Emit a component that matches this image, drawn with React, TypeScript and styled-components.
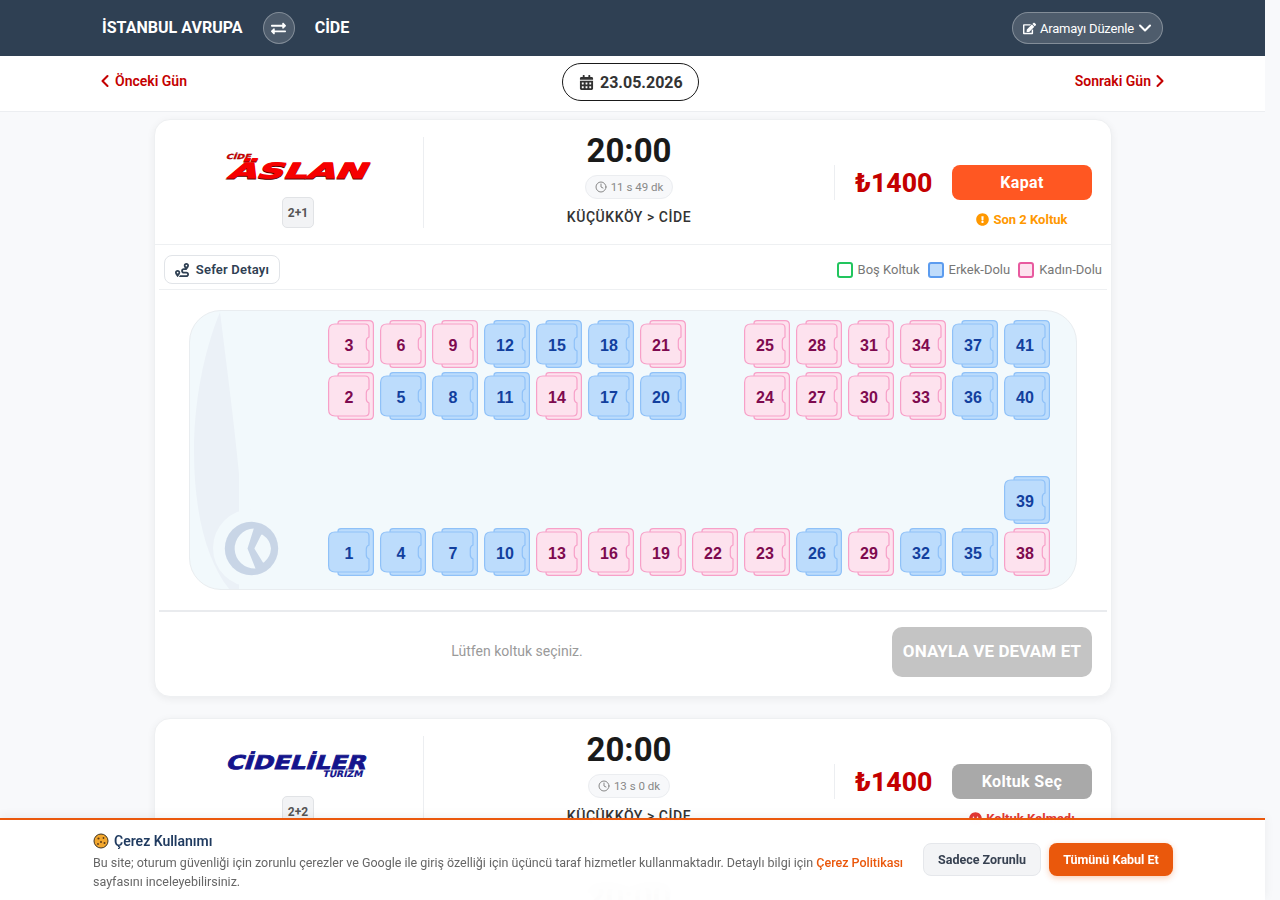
import { ReactNode } from 'react';
import styled, { createGlobalStyle } from 'styled-components';
import { ChevronDown, ChevronLeft, ChevronRight, Clock } from 'lucide-react';
import {
	FaCalendarAlt,
	FaEdit,
	FaExchangeAlt,
	FaExclamationCircle,
	FaFrown,
	FaRoute,
} from 'react-icons/fa';

const GlobalStyle = createGlobalStyle`
	html, body {
		margin: 0;
		height: 900px;
		overflow: hidden;
		background: #f8f9fb;
		font-family: Roboto, "Liberation Sans", sans-serif;
	}
	* { box-sizing: border-box; }
`;

const Page = styled.div`
	width: 1265px;
	height: 900px;
	overflow: hidden;
`;

const Header = styled.header`
	height: 56px;
	background: #2f4053;
	color: #fff;
	display: flex;
	align-items: center;
	justify-content: space-between;
	padding: 0 102px;
`;

const RouteTitle = styled.div`
	display: flex;
	align-items: center;
	gap: 20px;
	font-size: 16px;
	font-weight: 700;
	letter-spacing: 0.03px;
`;

const RouteName = styled.span`
	padding-bottom: 2px;
`;

const SwapCircle = styled.span`
	width: 32px;
	height: 32px;
	border-radius: 50%;
	display: flex;
	align-items: center;
	justify-content: center;
	background: rgba(255, 255, 255, 0.15);
	border: 1px solid rgba(255, 255, 255, 0.3);
	font-size: 15px;
`;

const EditButton = styled.button`
	width: 151px;
	height: 32px;
	border-radius: 16px;
	display: flex;
	align-items: center;
	gap: 4px;
	color: #fff;
	font: 400 13px Roboto, sans-serif;
	letter-spacing: -0.2px;
	background: rgba(255, 255, 255, 0.15);
	border: 1px solid rgba(255, 255, 255, 0.3);
	padding: 0 0 0 10px;
	svg:last-child {
		margin-left: -3px;
	}
`;

const DateBar = styled.div`
	height: 56px;
	background: #fff;
	border-bottom: 1px solid #eceef1;
	display: flex;
	align-items: flex-start;
	justify-content: space-between;
	padding: 7px 102px 0;
`;

const DayLink = styled.a`
	height: 36px;
	display: flex;
	align-items: center;
	color: #c40000;
	font-size: 14px;
	font-weight: 600;
`;

const PrevIcon = styled(ChevronLeft)`
	margin-left: -7px;
`;

const NextIcon = styled(ChevronRight)`
	margin: 0 -7px 0 -1px;
`;

const DatePill = styled.div`
	width: 137px;
	height: 38px;
	border: 1.5px solid #1a1a1a;
	border-radius: 19px;
	display: flex;
	align-items: center;
	justify-content: center;
	gap: 6px;
	color: #333;
	font-size: 16px;
	font-weight: 700;
`;

const Main = styled.main`
	width: 958px;
	margin: 7px 0 0 154px;
	display: flex;
	flex-direction: column;
	gap: 21px;
`;

const Card = styled.article`
	background: #fff;
	border: 1px solid #eef0f2;
	border-radius: 16px;
	box-shadow: 0 2px 8px rgba(0, 0, 0, 0.06);
	margin: 0;
`;

const Summary = styled.section`
	display: flex;
	padding: 17px 0 0;
	height: 125px;
`;

const SummaryOpen = styled(Summary)`
	border-bottom: 1px solid #eef0f2;
`;

const LogoColumn = styled.div`
	width: 269px;
	height: 91px;
	padding-left: 18px;
	border-right: 1px solid #eceef1;
	display: flex;
	flex-direction: column;
	align-items: center;
`;

const LogoBox = styled.div`
	height: 60px;
	display: flex;
	align-items: center;
	justify-content: center;
`;

const LogoArt = styled.svg`
	margin-right: -20px;
`;

const LayoutBadge = styled.span`
	width: 32px;
	height: 31px;
	display: flex;
	align-items: center;
	justify-content: center;
	background: #f2f3f5;
	border: 1px solid #e1e3e6;
	border-radius: 5px;
	color: #555;
	font-size: 12px;
	font-weight: 700;
`;

const TimeColumn = styled.div`
	flex: 1;
	display: flex;
	flex-direction: column;
	align-items: center;
`;

const Time = styled.div`
	margin-top: -1px;
	font-size: 33px;
	line-height: 30px;
	font-weight: 700;
	color: #1a1a1a;
`;

const Duration = styled.span`
	margin-top: 9px;
	height: 24px;
	padding: 0 9px;
	display: flex;
	align-items: center;
	gap: 4px;
	background: #f7f8fa;
	border: 1px solid #ebedf0;
	border-radius: 12px;
	color: #888;
	font-size: 11.5px;
`;

const Stops = styled.div`
	margin-top: 10px;
	font-size: 14px;
	font-weight: 500;
	letter-spacing: 0.55px;
	color: #333;
`;

const PriceColumn = styled.div`
	width: 277px;
	padding: 28px 19px 0 0;
	display: flex;
	flex-direction: column;
	align-items: flex-end;
`;

const PriceRow = styled.div`
	width: 258px;
	height: 35px;
	display: flex;
	align-items: center;
	justify-content: space-between;
	border-left: 1px solid #eceef1;
	padding-left: 20px;
`;

const Price = styled.strong`
	font-size: 26.6px;
	font-weight: 800;
	color: #c40000;
`;

const ActionButton = styled.button`
	width: 140px;
	height: 35px;
	border: 0;
	border-radius: 8px;
	color: #fff;
	font: 700 16px Roboto, sans-serif;
	letter-spacing: 0.35px;
	background: ${(p: { $muted?: boolean }) => (p.$muted ? '#a9a9a9' : '#ff5722')};
`;

const Note = styled.div`
	width: 140px;
	margin-top: 12px;
	display: flex;
	align-items: center;
	justify-content: center;
	gap: 4px;
	font-size: 13px;
	font-weight: 700;
	color: ${(p: { $color: string }) => p.$color};
`;

const DetailBar = styled.div`
	height: 45px;
	margin: 0 4px;
	padding: 10px 5px 0;
	border-bottom: 1px solid #eef0f2;
	display: flex;
	align-items: flex-start;
	justify-content: space-between;
`;

const DetailButton = styled.button`
	width: 116px;
	height: 29px;
	border: 1px solid #e1e4e8;
	border-radius: 8px;
	background: #fff;
	display: flex;
	align-items: center;
	justify-content: center;
	gap: 7px;
	color: #2f4053;
	font: 600 13px Roboto, sans-serif;
	letter-spacing: 0.2px;
	padding: 0;
`;

const Legend = styled.div`
	height: 29px;
	display: flex;
	gap: 8px;
	font-size: 13px;
	color: #777;
`;

const LegendItem = styled.span`
	display: flex;
	align-items: center;
	gap: 5px;
`;

const Swatch = styled.i<{ $border: string; $fill: string }>`
	width: 16px;
	height: 16px;
	border-radius: 3px;
	border: 2px solid ${(p) => p.$border};
	background: ${(p) => p.$fill};
`;

const BusPanel = styled.div`
	position: relative;
	width: 888px;
	height: 280px;
	margin: 20px auto;
	padding: 9px 0 0 138px;
	background: #f2f9fc;
	border: 1px solid #e9edf0;
	border-radius: 32px;
	overflow: hidden;
`;

const CockpitArt = styled.svg`
	position: absolute;
	left: 0;
	top: 0;
`;

const SeatGrid = styled.div`
	position: relative;
	display: grid;
	grid-template-columns: repeat(14, 46px);
	grid-auto-rows: 48px;
	column-gap: 6px;
	row-gap: 4px;
`;

type SeatKind = 'male' | 'female';

const seatColors = {
	male: { fill: '#bcdcfc', stroke: '#8fc1f8', text: '#123f9e' },
	female: { fill: '#fde2ee', stroke: '#f7a0c8', text: '#7e0a4f' },
};

const SeatBox = styled.div<{ $row: number; $col: number; $kind: SeatKind }>`
	position: relative;
	grid-row: ${(p) => p.$row};
	grid-column: ${(p) => p.$col};
	width: 46px;
	height: 48px;
	display: flex;
	align-items: center;
	justify-content: center;
	padding: 4px 4px 0 0;
	font: 700 16px "Liberation Sans", sans-serif;
	color: ${(p) => seatColors[p.$kind].text};
`;

const SeatShape = styled.svg`
	position: absolute;
	left: 0;
	top: 0;
`;

const SeatNumber = styled.span`
	position: relative;
`;

const Seat = ({ n, row, col, kind }: { n: number; row: number; col: number; kind: SeatKind }) => {
	const c = seatColors[kind];
	return (
		<SeatBox $row={row} $col={col} $kind={kind}>
			<SeatShape width="46" height="48" viewBox="0 0 46 48" fill={c.fill} stroke={c.stroke} strokeWidth="1.2">
				<path d="M10 4V3Q10 .6 13 .6H41Q45.4 .6 45.4 5V43Q45.400 47.400 41 47.400H13Q10 47.400 10 45V44" />
				<path d="M7 4H37Q41 4 41 8V17Q38.300 18 38.300 21V27Q38.300 30 41 31V40Q41 44 37 44H7Q.6 44 .6 37.500V10.500Q.6 4 7 4Z" />
			</SeatShape>
			<SeatNumber>{n}</SeatNumber>
		</SeatBox>
	);
};

const seatRows: { row: number; seats: [number, number, SeatKind][] }[] = [
	{
		row: 1,
		seats: [
			[3, 1, 'female'], [6, 2, 'female'], [9, 3, 'female'], [12, 4, 'male'], [15, 5, 'male'],
			[18, 6, 'male'], [21, 7, 'female'], [25, 9, 'female'], [28, 10, 'female'], [31, 11, 'female'],
			[34, 12, 'female'], [37, 13, 'male'], [41, 14, 'male'],
		],
	},
	{
		row: 2,
		seats: [
			[2, 1, 'female'], [5, 2, 'male'], [8, 3, 'male'], [11, 4, 'male'], [14, 5, 'female'],
			[17, 6, 'male'], [20, 7, 'male'], [24, 9, 'female'], [27, 10, 'female'], [30, 11, 'female'],
			[33, 12, 'female'], [36, 13, 'male'], [40, 14, 'male'],
		],
	},
	{ row: 4, seats: [[39, 14, 'male']] },
	{
		row: 5,
		seats: [
			[1, 1, 'male'], [4, 2, 'male'], [7, 3, 'male'], [10, 4, 'male'], [13, 5, 'female'],
			[16, 6, 'female'], [19, 7, 'female'], [22, 8, 'female'], [23, 9, 'female'], [26, 10, 'male'],
			[29, 11, 'female'], [32, 12, 'male'], [35, 13, 'male'], [38, 14, 'female'],
		],
	},
];

const BusFooter = styled.div`
	height: 86px;
	margin: 0 4px;
	border-top: 2px solid #e9ebee;
	display: flex;
	align-items: flex-start;
	padding: 15px 15px 0 15px;
	gap: 12px;
`;

const Hint = styled.p`
	flex: 1;
	margin: 0;
	padding: 16px 20px 0 0;
	text-align: center;
	font-size: 14px;
	color: #9a9a9a;
`;

const ConfirmButton = styled.button`
	width: 200px;
	height: 50px;
	border: 0;
	border-radius: 10px;
	background: #c4c4c4;
	color: #fff;
	font: 700 17px Roboto, sans-serif;
	letter-spacing: 0.1px;
	padding: 0 0 2px;
`;

const AslanLogo = () => (
	<LogoArt width="170" height="30" viewBox="0 0 170 30">
		<g fontFamily="DejaVu Sans" fontWeight="700">
			<text x="5.500" y="7.500" fontSize="7" fill="#e00000" stroke="#7a0000" strokeWidth="0.3" transform="skewX(-20)" textLength="25" lengthAdjust="spacingAndGlyphs">CİDE</text>
			<text x="18.500" y="27.500" fontSize="21" fill="#5a0000" stroke="#5a0000" strokeWidth="1" transform="skewX(-28)" textLength="138" lengthAdjust="spacingAndGlyphs">ÄSLAN</text>
			<text x="18" y="26.500" fontSize="21" fill="#f60000" stroke="#f60000" strokeWidth="1" transform="skewX(-28)" textLength="138" lengthAdjust="spacingAndGlyphs">ÄSLAN</text>
		</g>
	</LogoArt>
);

const CidelilerLogo = () => (
	<LogoArt width="166" height="30" viewBox="0 0 166 30">
		<g fontFamily="DejaVu Sans" fontWeight="700" fill="#14148c" stroke="#14148c">
			<text x="6" y="18" fontSize="19" strokeWidth="0.8" transform="skewX(-18)" textLength="140" lengthAdjust="spacingAndGlyphs">CİDELİLER</text>
			<text x="104" y="26.500" fontSize="9" strokeWidth="0.2" transform="skewX(-14)" textLength="40" lengthAdjust="spacingAndGlyphs">TURİZM</text>
		</g>
	</LogoArt>
);

type TripProps = {
	logo: ReactNode;
	layout: string;
	duration: string;
	action: string;
	muted?: boolean;
	noteIcon: ReactNode;
	note: string;
	noteColor: string;
	open?: boolean;
};

const Trip = ({ logo, layout, duration, action, muted, noteIcon, note, noteColor, open }: TripProps) => {
	const Top = open ? SummaryOpen : Summary;
	return (
		<Top>
			<LogoColumn>
				<LogoBox>{logo}</LogoBox>
				<LayoutBadge>{layout}</LayoutBadge>
			</LogoColumn>
			<TimeColumn>
				<Time>20:00</Time>
				<Duration>
					<Clock size={12} strokeWidth={2} />
					{duration}
				</Duration>
				<Stops>KÜÇÜKKÖY &gt; CİDE</Stops>
			</TimeColumn>
			<PriceColumn>
				<PriceRow>
					<Price>₺1400</Price>
					<ActionButton $muted={muted}>{action}</ActionButton>
				</PriceRow>
				<Note $color={noteColor}>
					{noteIcon}
					{note}
				</Note>
			</PriceColumn>
		</Top>
	);
};

const CookieBanner = styled.aside`
	position: fixed;
	left: 0;
	bottom: 0;
	width: 1265px;
	height: 82px;
	border-top: 2.5px solid #ea580c;
	background: rgba(255, 255, 255, 0.98);
	backdrop-filter: blur(8px);
	display: flex;
	padding: 12px 92px 0 93px;
	gap: 14px;
	box-shadow: 0 -2px 10px rgba(0, 0, 0, 0.06);
`;

const CookieText = styled.div`
	width: 816px;
`;

const CookieTitle = styled.div`
	display: flex;
	align-items: center;
	gap: 5px;
	font-size: 14px;
	font-weight: 600;
	line-height: 18px;
	color: #1f3a5f;
`;

const CookieBody = styled.p`
	margin: 3px 0 0;
	font-size: 12.5px;
	letter-spacing: -0.01px;
	line-height: 19px;
	color: #666;
`;

const PolicyLink = styled.a`
	color: #ea580c;
	font-weight: 500;
	white-space: nowrap;
`;

const CookieActions = styled.div`
	display: flex;
	gap: 8px;
	padding-top: 11px;
`;

const SecondaryButton = styled.button`
	width: 118px;
	height: 33px;
	border: 1px solid #e5e7eb;
	border-radius: 8px;
	background: #f3f4f6;
	color: #374151;
	font: 700 12.5px Roboto, sans-serif;
	padding: 0;
`;

const PrimaryButton = styled.button`
	width: 124px;
	height: 33px;
	border: 0;
	border-radius: 8px;
	background: #ea580c;
	color: #fff;
	font: 700 12.5px Roboto, sans-serif;
	padding: 0;
	box-shadow: 0 2px 6px rgba(234, 88, 12, 0.3);
`;

export default function App() {
	return (
		<Page>
			<GlobalStyle />
			<Header>
				<RouteTitle>
					<RouteName>İSTANBUL AVRUPA</RouteName>
					<SwapCircle>
						<FaExchangeAlt />
					</SwapCircle>
					<RouteName>CİDE</RouteName>
				</RouteTitle>
				<EditButton>
					<FaEdit size={13} />
					Aramayı Düzenle
					<ChevronDown size={20} strokeWidth={2.5} />
				</EditButton>
			</Header>
			<DateBar>
				<DayLink>
					<PrevIcon size={20} strokeWidth={2.5} />
					Önceki Gün
				</DayLink>
				<DatePill>
					<FaCalendarAlt size={15} />
					23.05.2026
				</DatePill>
				<DayLink>
					Sonraki Gün
					<NextIcon size={20} strokeWidth={2.5} />
				</DayLink>
			</DateBar>
			<Main>
				<Card>
					<Trip
						open
						logo={<AslanLogo />}
						layout="2+1"
						duration="11 s 49 dk"
						action="Kapat"
						noteIcon={<FaExclamationCircle size={13} />}
						note="Son 2 Koltuk"
						noteColor="#ff9800"
					/>
					<DetailBar>
						<DetailButton>
							<FaRoute size={14} />
							Sefer Detayı
						</DetailButton>
						<Legend>
							<LegendItem>
								<Swatch $border="#22c55e" $fill="#fff" />
								Boş Koltuk
							</LegendItem>
							<LegendItem>
								<Swatch $border="#5c9cef" $fill="#bfdcfb" />
								Erkek-Dolu
							</LegendItem>
							<LegendItem>
								<Swatch $border="#e85a9f" $fill="#fde2ee" />
								Kadın-Dolu
							</LegendItem>
						</Legend>
					</DetailBar>
					<BusPanel>
						<CockpitArt width="140" height="280" viewBox="0 0 140 280">
							<path d="M30 1C14 40 4 90 4 140C4 200 16 250 40 279H49V163C44 110 36 50 30 1Z" fill="#ebf1f7" />
							<circle cx="62" cy="237" r="39" fill="#f2f9fc" />
							<g transform="translate(61.500 237.500)">
								<circle r="26.700" fill="#c8d5e6" />
								<path d="M2.300 -20L-4 0L4 20A20 20 0 0 1 2.300 -20Z" fill="#f2f9fc" />
								<path d="M10.500 -13L4 0L12 13Q18 8 18.500 0Q18 -8 10.500 -13Z" fill="#f2f9fc" stroke="#f2f9fc" strokeWidth="2" strokeLinejoin="round" />
							</g>
						</CockpitArt>
						<SeatGrid>
							{seatRows.map((r) =>
								r.seats.map(([n, col, kind]) => <Seat key={n} n={n} row={r.row} col={col} kind={kind} />),
							)}
						</SeatGrid>
					</BusPanel>
					<BusFooter>
						<Hint>Lütfen koltuk seçiniz.</Hint>
						<ConfirmButton>ONAYLA VE DEVAM ET</ConfirmButton>
					</BusFooter>
				</Card>
				<Card>
					<Trip
						logo={<CidelilerLogo />}
						layout="2+2"
						duration="13 s 0 dk"
						action="Koltuk Seç"
						muted
						noteIcon={<FaFrown size={13} />}
						note="Koltuk Kalmadı"
						noteColor="#e53935"
					/>
				</Card>
				<Card>
					<Summary>
						<LogoColumn />
						<TimeColumn>
							<Time>20:00</Time>
						</TimeColumn>
						<PriceColumn />
					</Summary>
				</Card>
			</Main>
			<CookieBanner>
				<CookieText>
					<CookieTitle>
						<svg width="16" height="16" viewBox="0 0 16 16">
							<circle cx="8" cy="8" r="7" fill="#f2a72e" stroke="#3f3320" strokeWidth="1" />
							<g fill="#5b3a16">
								<circle cx="5.500" cy="5.500" r="1.100" />
								<circle cx="10.500" cy="5" r="0.900" />
								<circle cx="8" cy="9" r="1" />
								<circle cx="11.500" cy="10" r="1" />
								<circle cx="5" cy="11" r="0.900" />
							</g>
						</svg>
						Çerez Kullanımı
					</CookieTitle>
					<CookieBody>
						Bu site; oturum güvenliği için zorunlu çerezler ve Google ile giriş özelliği için üçüncü taraf hizmetler kullanmaktadır. Detaylı bilgi için <PolicyLink>Çerez Politikası</PolicyLink> sayfasını inceleyebilirsiniz.
					</CookieBody>
				</CookieText>
				<CookieActions>
					<SecondaryButton>Sadece Zorunlu</SecondaryButton>
					<PrimaryButton>Tümünü Kabul Et</PrimaryButton>
				</CookieActions>
			</CookieBanner>
		</Page>
	);
}
